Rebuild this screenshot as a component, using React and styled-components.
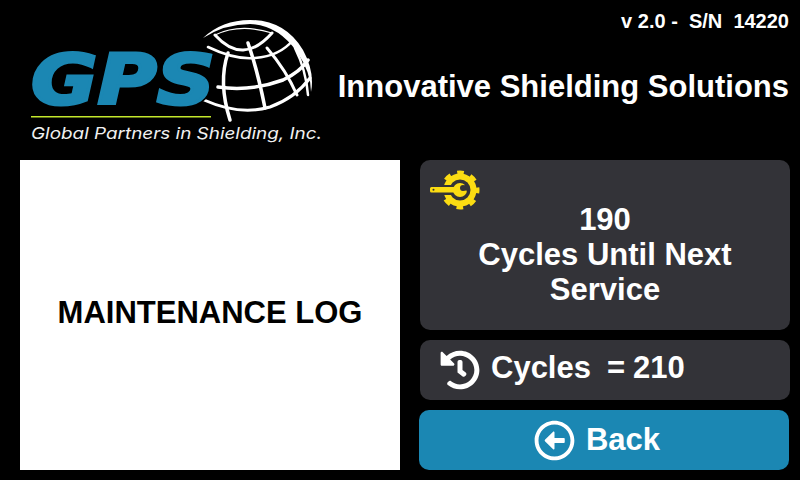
import React from "react";
import styled, { createGlobalStyle } from "styled-components";
import { FaHistory, FaRegArrowAltCircleLeft } from "react-icons/fa";

const GlobalStyle = createGlobalStyle`
  html, body {
    margin: 0;
    padding: 0;
    background: #000;
  }
  body {
    font-family: "Liberation Sans", Arial, sans-serif;
  }
`;

const Page = styled.div`
  width: 800px;
  height: 480px;
  overflow: hidden;
  display: flex;
  flex-direction: column;
  background: #000;
  color: #fff;
`;

const Header = styled.header`
  height: 160px;
  box-sizing: border-box;
  padding: 10px 11px 0 20px;
  display: flex;
  justify-content: space-between;
`;

const LogoSvg = styled.svg`
  width: 310px;
  height: 140px;
  display: block;
  flex: none;
`;

const HeaderInfo = styled.div`
  display: flex;
  flex-direction: column;
  align-items: flex-end;
`;

const Version = styled.div`
  font-size: 20px;
  line-height: 22px;
  font-weight: 700;
  white-space: pre;
`;

const Tagline = styled.div`
  margin-top: 34px;
  font-size: 31px;
  line-height: 42px;
  font-weight: 700;
  white-space: nowrap;
`;

const Main = styled.main`
  flex: 1;
  padding: 0 10px 10px 20px;
  display: grid;
  grid-template-columns: 380px 370px;
  column-gap: 20px;
`;

const LogPanel = styled.section`
  background: #fff;
  color: #000;
  display: flex;
  align-items: center;
  justify-content: center;
  font-size: 31px;
  font-weight: 700;
  padding-bottom: 5px;
  box-sizing: border-box;
`;

const Side = styled.div`
  display: flex;
  flex-direction: column;
  gap: 10px;
`;

const ServiceCard = styled.div`
  position: relative;
  height: 170px;
  box-sizing: border-box;
  padding-top: 42px;
  border-radius: 10px;
  background: #333338;
  text-align: center;
  font-size: 31px;
  line-height: 35px;
  font-weight: 700;
`;

const ServiceIcon = styled.div`
  position: absolute;
  left: 10px;
  top: 10px;
  width: 50px;
  height: 40px;

  svg {
    display: block;
  }
`;

const CyclesRow = styled.div`
  height: 60px;
  box-sizing: border-box;
  padding-left: 20px;
  border-radius: 10px;
  background: #333338;
  display: flex;
  align-items: center;
  gap: 11px;
  font-size: 31px;
  font-weight: 700;
  white-space: pre;
  word-spacing: -0.6px;

  svg {
    width: 40px;
    height: 40px;
  }

  span {
    margin-bottom: 4px;
  }
`;

const BackButton = styled.button`
  height: 60px;
  margin: 0 1px 0 -1px;
  padding: 0 14px 0 0;
  border: 0;
  border-radius: 10px;
  background: #1b87b3;
  color: #fff;
  font-family: inherit;
  font-size: 31px;
  font-weight: 700;
  display: flex;
  align-items: center;
  justify-content: center;
  gap: 11px;

  svg {
    width: 41px;
    height: 41px;
  }
`;

const GpsLetters = (props) => (
  <text
    x="31"
    y="104"
    fill="#1b87b3"
    fontFamily="DejaVu Sans, sans-serif"
    fontWeight="700"
    fontStyle="italic"
    fontSize="70"
    textLength="184"
    lengthAdjust="spacingAndGlyphs"
    {...props}
  >
    GPS
  </text>
);

// drawn in screen coordinates, viewBox starts where the header padding does
const Logo = () => (
  <LogoSvg viewBox="20 10 310 140">
    <g fill="none" stroke="#fff" strokeLinecap="round">
      <path d="M215 35 Q243 66 272 33" strokeWidth="3" />
      <path d="M215 35 Q240 23 272 33" strokeWidth="1.2" />
      <path d="M208 47 Q235 60 255 58 Q280 56 293 40" strokeWidth="2.5" />
      <path d="M218 87 Q250 92 283 80 Q300 72 308 60" strokeWidth="3.5" />
      <path d="M204 100 Q240 116 270 107 Q295 98 310 78" strokeWidth="3" />
      <path d="M228 53 Q218 82 230 120" strokeWidth="3.5" />
      <path d="M248 43 Q258 72 265 108" strokeWidth="3.5" />
      <path d="M267 48 Q286 70 297 95" strokeWidth="3" />
      <path d="M295 48 Q306 70 308 95" strokeWidth="2.5" />
    </g>
    <path
      d="M203 38 Q222 20 250 20 Q285 20 303 50 Q315 72 311 92 Q311 72 297 52 Q278 25 250 24 Q225 24 203 38 Z"
      fill="#fff"
    />
    <GpsLetters stroke="#000" strokeWidth="6" />
    <GpsLetters stroke="#1b87b3" strokeWidth="3" />
    <rect x="31" y="116" width="180" height="1.5" fill="#c4e82c" />
    <text
      x="31"
      y="139"
      fill="#f0f0f0"
      fontFamily="Inter, sans-serif"
      fontStyle="italic"
      fontSize="16.5"
      textLength="291"
      lengthAdjust="spacingAndGlyphs"
    >
      Global Partners in Shielding, Inc.
    </text>
  </LogoSvg>
);

const GearWrench = () => (
  <svg viewBox="0 0 50 40" width="50" height="40">
    <circle cx="30" cy="20" r="17" fill="none" stroke="#fbdc12" strokeWidth="5" strokeDasharray="6.5 6.85" strokeDashoffset="3.25" />
    <circle cx="30" cy="20" r="13.5" fill="none" stroke="#fbdc12" strokeWidth="6" />
    <rect x="0" y="15" width="24" height="10" fill="#333338" />
    <path d="M0 18.5 a1.5 1.5 0 0 1 1.5 -1.5 H26 V22.5 H1.5 a1.5 1.5 0 0 1 -1.5 -1.5 Z" fill="#fbdc12" />
    <circle cx="30" cy="20" r="7" fill="#fbdc12" />
    <path d="M31 20 L37 12 L39 21 Z" fill="#333338" />
    <circle cx="33" cy="18" r="3" fill="#333338" />
    <circle cx="3.5" cy="19.7" r="1" fill="#333338" />
  </svg>
);

export default function App() {
  return (
    <>
      <GlobalStyle />
      <Page>
        <Header>
          <Logo />
          <HeaderInfo>
            <Version>{"v 2.0 -  S/N  14220"}</Version>
            <Tagline>Innovative Shielding Solutions</Tagline>
          </HeaderInfo>
        </Header>
        <Main>
          <LogPanel>MAINTENANCE LOG</LogPanel>
          <Side>
            <ServiceCard>
              <ServiceIcon>
                <GearWrench />
              </ServiceIcon>
              190
              <br />
              Cycles Until Next
              <br />
              Service
            </ServiceCard>
            <CyclesRow>
              <FaHistory />
              <span>{"Cycles  = 210"}</span>
            </CyclesRow>
            <BackButton>
              <FaRegArrowAltCircleLeft />
              Back
            </BackButton>
          </Side>
        </Main>
      </Page>
    </>
  );
}
